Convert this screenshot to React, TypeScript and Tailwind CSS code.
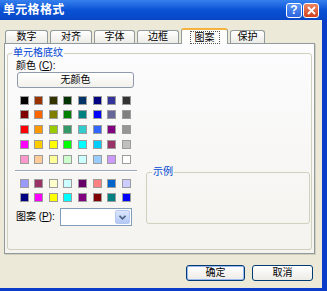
import React from "react";

const TOP_COLORS = [
  ["#000000", "#993300", "#333300", "#003300", "#003366", "#000080", "#333399", "#333333"],
  ["#800000", "#FF6600", "#808000", "#008000", "#008080", "#0000FF", "#666699", "#808080"],
  ["#FF0000", "#FF9900", "#99CC00", "#339966", "#33CCCC", "#3366FF", "#800080", "#969696"],
  ["#FF00FF", "#FFCC00", "#FFFF00", "#00FF00", "#00FFFF", "#00CCFF", "#993366", "#C0C0C0"],
  ["#FF99CC", "#FFCC99", "#FFFF99", "#CCFFCC", "#CCFFFF", "#99CCFF", "#CC99FF", "#FFFFFF"],
];

const CHART_COLORS = [
  ["#9999FF", "#993366", "#FFFFCC", "#CCFFFF", "#660066", "#FF8080", "#0066CC", "#CCCCFF"],
  ["#000080", "#FF00FF", "#FFFF00", "#00FFFF", "#800080", "#800000", "#008080", "#0000FF"],
];

const TABS = [
  { label: "数字", w: "w-[43px]" },
  { label: "对齐", w: "w-[42px]" },
  { label: "字体", w: "w-[41px]" },
  { label: "边框", w: "w-[42px]" },
  { label: "图案", w: "w-[47px]", active: true },
  { label: "保护", w: "w-[35px]" },
];

function Swatches({ rows, rowGap }: { rows: string[][]; rowGap: string }) {
  return (
    <div className={`grid grid-cols-[repeat(8,9px)] gap-x-[5.67px] ${rowGap}`}>
      {rows.flat().map((c, i) => (
        <div key={i} className="w-[9px] h-[9px] border border-[#9c9c9c]" style={{ backgroundColor: c }} />
      ))}
    </div>
  );
}

export default function App() {
  return (
    <div className="w-[327px] h-[291px] flex flex-col overflow-hidden bg-[#0B3CC9] font-['Liberation_Sans','Noto_Sans_CJK_SC',sans-serif] text-[10px] leading-[12px] text-black">
      {/* Title bar */}
      <div className="h-[20px] shrink-0 flex items-center pl-[3px] pr-[8px] bg-gradient-to-b from-[#3580EE] via-[#0A52D6] to-[#0746C6]">
        <span className="text-white font-bold text-[12px] leading-[14px] tracking-[0.3px]">单元格格式</span>
        <div className="ml-auto flex gap-[1px]">
          <div className="w-[16px] h-[15px] rounded-[3px] border border-white bg-gradient-to-b from-[#5C95F4] to-[#2A63DE] flex items-center justify-center text-white font-bold text-[12px] leading-none">
            ?
          </div>
          <div className="w-[16px] h-[15px] rounded-[3px] border border-white bg-gradient-to-b from-[#EC8461] to-[#D2411C] flex items-center justify-center">
            <svg width="9" height="9" viewBox="0 0 9 9">
              <path d="M1 1 L8 8 M8 1 L1 8" stroke="white" strokeWidth="1.8" />
            </svg>
          </div>
        </div>
      </div>

      {/* Frame + body */}
      <div className="flex-1 flex pr-[5px] pb-[3px]">
        <div className="flex-1 flex flex-col bg-[#ECE9D8]">
          {/* Tabs */}
          <div className="h-[15px] mt-[8px] ml-[5px] flex items-end gap-[2px] relative z-10">
            {TABS.map((t) =>
              t.active ? (
                <div
                  key={t.label}
                  className={`${t.w} h-[16px] -mb-[1px] flex items-center justify-center rounded-t-[3px] border border-b-0 border-[#919B9C] border-t-2 border-t-[#F3B33D] bg-[#FCFCFB]`}
                >
                  <span className="border border-dotted border-[#555] px-[4px] leading-[11px]">{t.label}</span>
                </div>
              ) : (
                <div
                  key={t.label}
                  className={`${t.w} h-[13px] flex items-center justify-center rounded-t-[3px] border border-b-0 border-[#919B9C] bg-gradient-to-b from-white to-[#ECEBE6]`}
                >
                  {t.label}
                </div>
              )
            )}
          </div>

          {/* Tab panel */}
          <div className="ml-[4px] w-[311px] h-[211px] border border-[#919B9C] bg-gradient-to-b from-[#FCFCFE] to-[#F4F3EE] shadow-[1px_1px_0_#D0CEBF]">
            <div className="relative ml-[2px] mt-[9px] w-[305px] h-[197px] rounded-[3px] border border-[#D0D0BF] flex">
              <span className="absolute left-[4px] -top-[7px] px-[1px] bg-[#FBFBFA] text-[#0046D5]">单元格底纹</span>

              {/* left column */}
              <div className="w-[138px] shrink-0 pl-[8px] flex flex-col">
                <div className="mt-[6px]">
                  颜色 (<span className="underline">C</span>):
                </div>
                <div className="ml-[1px] w-[117px] h-[16px] rounded-[3px] border border-[#8E9AAB] bg-gradient-to-b from-white to-[#F1F0EA] flex items-center justify-center">
                  无颜色
                </div>
                <div className="mt-[7.5px] ml-[3.5px]">
                  <Swatches rows={TOP_COLORS} rowGap="gap-y-[5.75px]" />
                </div>
                <div className="mt-[6px] -ml-[1px] w-[122px] h-[2px] border-t border-[#9DA8BA] border-b border-b-white" />
                <div className="mt-[7px] ml-[3.5px]">
                  <Swatches rows={CHART_COLORS} rowGap="gap-y-[5px]" />
                </div>
                <div className="mt-[6.5px] flex items-center h-[18px]">
                  <span className="w-[44px]">
                    图案 (<span className="underline">P</span>):
                  </span>
                  <div className="w-[72px] h-[18px] border border-[#7F9DB9] bg-white flex justify-end p-[1px]">
                    <div className="w-[15px] h-full rounded-[2px] border border-[#B7C9F0] bg-gradient-to-b from-[#DCE6FC] to-[#B3C8F6] flex items-center justify-center">
                      <svg width="7" height="5" viewBox="0 0 7 5">
                        <path d="M0.5 0.8 L3.5 3.8 L6.5 0.8" stroke="#4D6185" strokeWidth="1.6" fill="none" />
                      </svg>
                    </div>
                  </div>
                </div>
              </div>

              {/* right column */}
              <div className="flex-1 pr-[1px] flex flex-col">
                <div className="relative mt-[118px] h-[52px] rounded-[3px] border border-[#D0D0BF]">
                  <span className="absolute left-[5px] -top-[7px] px-[1px] bg-[#F7F6F2] text-[#0046D5]">示例</span>
                </div>
              </div>
            </div>
          </div>

          {/* Buttons */}
          <div className="mt-[11px] pr-[9px] flex justify-end gap-[7px]">
            <div className="w-[59px] h-[16px] rounded-[3px] border border-[#003C74] bg-gradient-to-b from-white to-[#ECEBE6] shadow-[inset_0_0_0_1px_#9AB8EF] flex items-center justify-center">
              确定
            </div>
            <div className="w-[61px] h-[16px] rounded-[3px] border border-[#003C74] bg-gradient-to-b from-white to-[#ECEBE6] flex items-center justify-center">
              取消
            </div>
          </div>
        </div>
      </div>
    </div>
  );
}
